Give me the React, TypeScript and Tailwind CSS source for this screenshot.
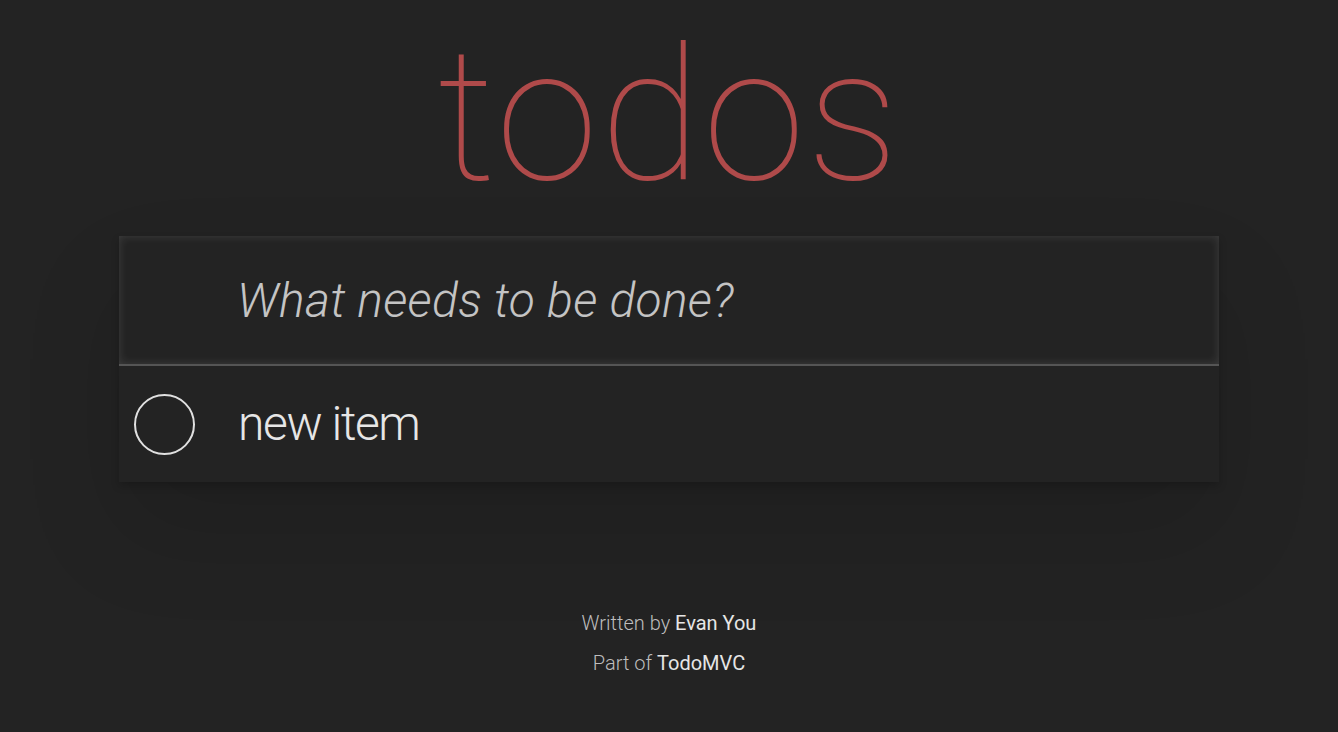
import { useState } from 'react';

type Todo = { id: number; title: string; done: boolean };

const font = { fontFamily: 'Roboto, "Liberation Sans", sans-serif' };

export default function App() {
  const [todos, setTodos] = useState<Todo[]>([{ id: 1, title: 'new item', done: false }]);
  const [draft, setDraft] = useState('');

  const toggle = (id: number) =>
    setTodos(todos.map(t => (t.id === id ? { ...t, done: !t.done } : t)));

  return (
    <div className="min-h-[732px] bg-[#232323] text-[#e6e6e6]" style={font}>
      <div className="mx-auto flex w-[1100px] flex-col items-center">
        <h1 className="h-[236px] text-[185px] font-thin leading-[232px] tracking-[2px] text-[#af4a4a]">
          todos
        </h1>

        <section className="w-full bg-[#232323] shadow-[0_4px_8px_rgba(0,0,0,0.2),0_50px_100px_rgba(0,0,0,0.12)]">
          <input
            value={draft}
            onChange={e => setDraft(e.target.value)}
            placeholder="What needs to be done?"
            className="block h-[130px] w-full border-b-2 border-[#555] bg-[#232323] pl-[118px] pr-8 text-[48px] font-light tracking-[0.3px] text-[#e6e6e6] outline-none shadow-[inset_0_0_10px_rgba(255,255,255,0.13)] placeholder:italic placeholder:text-[#c4c4c4]"
          />
          <ul>
            {todos.map(todo => (
              <li key={todo.id} className="flex h-[116px] items-center">
                <button
                  onClick={() => toggle(todo.id)}
                  className="ml-[15px] h-[61px] w-[61px] shrink-0 rounded-full border-2 border-[#e0e0e0]"
                />
                <span className="ml-[43px] text-[48px] font-light tracking-[-1.4px] text-[#e6e6e6]">
                  {todo.title}
                </span>
              </li>
            ))}
          </ul>
        </section>

        <footer className="mt-[121px] text-center text-[20px] font-light text-[#bdbdbd]">
          <p className="leading-[40px]">
            Written by <a className="font-normal text-[#e6e6e6]">Evan You</a>
          </p>
          <p className="leading-[40px]">
            Part of <a className="font-normal text-[#e6e6e6]">TodoMVC</a>
          </p>
        </footer>
      </div>
    </div>
  );
}
